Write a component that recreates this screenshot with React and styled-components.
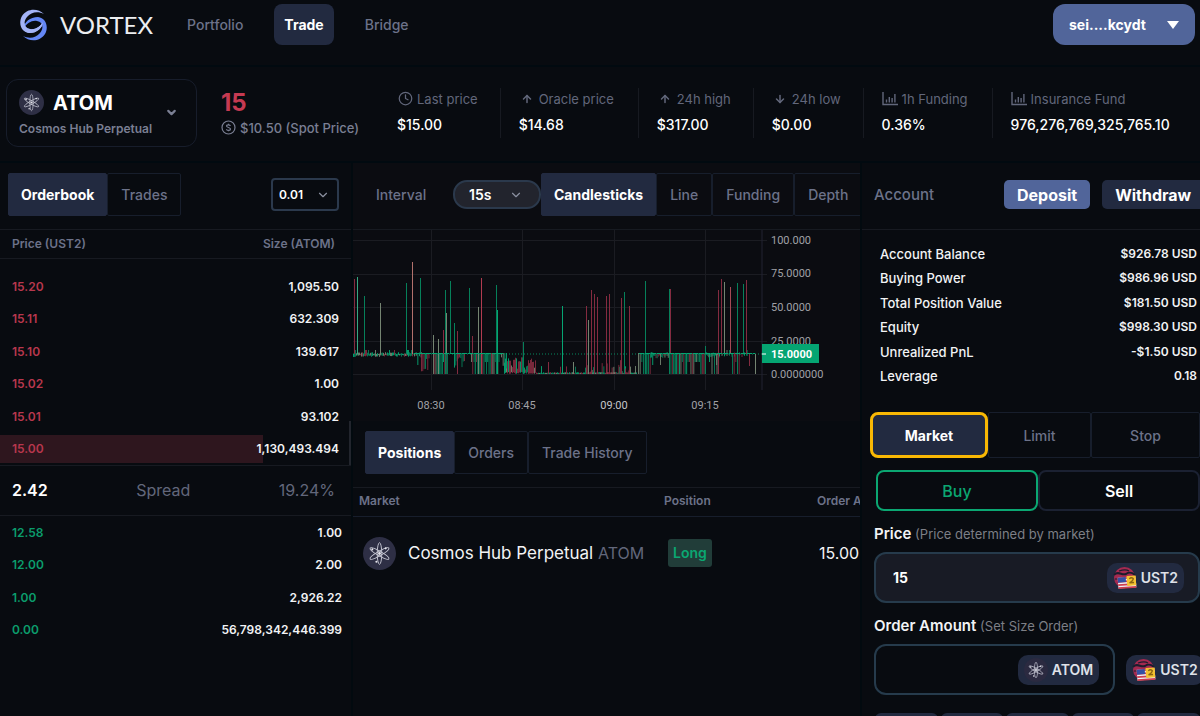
import { useState } from "react"
import styled, { createGlobalStyle } from "styled-components"
import { ArrowDown, ArrowUp, ChevronDown, Clock } from "lucide-react"

const GlobalStyle = createGlobalStyle`
    * { box-sizing: border-box; }
    body {
        margin: 0;
        background: #080b10;
        color: #f2f3f5;
        font-family: Inter, "Liberation Sans", sans-serif;
        font-size: 13px;
    }
    button, input, select { font-family: inherit; margin: 0; }
`

const Page = styled.div`
    height: 100vh;
    min-height: 600px;
    display: flex;
    flex-direction: column;
    overflow: hidden;
`

const Header = styled.header`
    display: flex;
    align-items: flex-start;
    padding: 4px 5px 0 20px;
    height: 67px;
    flex: none;
    border-bottom: 2px solid #010a10;
`

const Logo = styled.a`
    display: flex;
    align-items: center;
    gap: 13px;
    height: 41px;
    color: #eceef0;
    text-decoration: none;
    font-family: Lato, sans-serif;
    font-size: 24px;
`

const Nav = styled.nav`
    display: flex;
    gap: 21px;
    margin-left: 24px;
    flex: 1;
`

const NavLink = styled.a`
    height: 41px;
    line-height: 41px;
    padding: 0 10px;
    border-radius: 8px;
    font-size: 14px;
    font-weight: ${(p) => (p.$active ? 700 : 500)};
    color: ${(p) => (p.$active ? "white" : "#6c7289")};
    background: ${(p) => (p.$active ? "#222a40" : "none")};
    text-decoration: none;
`

const WalletButton = styled.button`
    display: flex;
    align-items: center;
    justify-content: space-between;
    width: 142px;
    height: 41px;
    padding: 0 16px;
    border: none;
    border-radius: 12px;
    background: #51659a;
    color: white;
    font-size: 14px;
    font-weight: 700;
`

const Ticker = styled.section`
    display: flex;
    align-items: center;
    height: 96px;
    flex: none;
    padding: 0 0 3px 6px;
    white-space: nowrap;
    border-bottom: 2px solid #010a10;
`

const MarketButton = styled.button`
    display: flex;
    align-items: center;
    justify-content: space-between;
    width: 191px;
    height: 68px;
    flex: none;
    padding: 0 18px 0 12px;
    border: 1px solid #171d2b;
    border-radius: 12px;
    background: none;
    color: #7a7f93;
    text-align: left;
`

const MarketTitle = styled.span`
    display: flex;
    align-items: center;
    gap: 9px;
    height: 30px;
    margin-bottom: 2px;
    color: white;
    font-size: 20px;
    font-weight: 700;
`

const MarketSub = styled.span`
    display: block;
    font-size: 12px;
    font-weight: 600;
    line-height: 18px;
`

const Spot = styled.div`
    width: 176px;
    flex: none;
    margin-left: 24px;
    color: #7a7f93;
    font-weight: 500;
    font-size: 13px;
`

const SpotPrice = styled.div`
    color: #c53a52;
    font-size: 24px;
    font-weight: 700;
    line-height: 30px;
`

const SpotNote = styled.div`
    display: flex;
    align-items: center;
    gap: 4px;
    height: 20px;
`

const Stats = styled.dl`
    display: flex;
    margin: 0;
`

const Stat = styled.div`
    height: 50px;
    padding: 1px ${(p) => p.$end}px 0 18px;
    border-right: 1px solid #171a21;
    &:first-child { padding-left: 0; }
    &:last-child { border-right: none; }
`

const StatLabel = styled.dt`
    display: flex;
    align-items: center;
    gap: 4px;
    height: 20px;
    font-size: 13px;
    color: #62677b;
`

const StatIcon = styled.span`
    display: flex;
    justify-content: center;
    width: 16px;
`

const StatValue = styled.dd`
    margin: 6px 0 0;
    font-size: 14px;
    font-weight: 500;
    line-height: 20px;
    color: white;
`

const Main = styled.main`
    display: grid;
    grid-template-columns: 353fr 509fr 338fr;
    flex: 1;
    min-height: 0;
`

const Column = styled.section`
    min-width: 0;
    overflow: hidden;
    border-right: 2px solid #020a0f;
    white-space: nowrap;
    &:last-child { border-right: none; }
`

const PanelBar = styled.div`
    display: flex;
    align-items: center;
    justify-content: ${(p) => (p.$spread ? "space-between" : "flex-start")};
    height: 67px;
    padding: 0 ${(p) => p.$end || 0}px 3px ${(p) => p.$start}px;
    border-bottom: 1px solid #171a21;
`

const Tabs = styled.div`
    display: flex;
    flex: none;
`

const Tab = styled.button`
    height: 43px;
    padding: 0 ${(p) => (p.$active ? 12 : 13)}px;
    border: 1px solid ${(p) => (p.$active ? "#222a40" : "#171e2c")};
    border-radius: 2px;
    background: ${(p) => (p.$active ? "#222a40" : "none")};
    color: ${(p) => (p.$active ? "white" : "#6c7289")};
    font-size: 14px;
    font-weight: ${(p) => (p.$active ? 700 : 500)};
    white-space: nowrap;
`

const SelectWrap = styled.label`
    position: relative;
    display: inline-flex;
    flex: none;
    color: #8b90a0;
    svg {
        position: absolute;
        right: ${(p) => (p.$round ? 18 : 9)}px;
        top: 50%;
        margin-top: -7px;
        pointer-events: none;
    }
`

const Select = styled.select`
    appearance: none;
    width: ${(p) => (p.$round ? 88 : 68)}px;
    height: ${(p) => (p.$round ? 29 : 33)}px;
    padding: 0 ${(p) => (p.$round ? 14 : 6)}px;
    border: 2px solid #2b394c;
    border-radius: ${(p) => (p.$round ? 14 : 4)}px;
    background: ${(p) => (p.$round ? "#22242d" : "#080b10")};
    color: white;
    font-size: ${(p) => (p.$round ? 14 : 12)}px;
    font-weight: 600;
`

const BookHead = styled.div`
    display: flex;
    align-items: center;
    justify-content: space-between;
    height: 29px;
    padding: 0 16px 2px 12px;
    border-bottom: 1px solid #171a21;
    color: #6c7289;
    font-size: 12px;
    font-weight: 600;
`

const BookSide = styled.div`
    position: relative;
    display: flex;
    flex-direction: column;
    justify-content: space-between;
    height: ${(p) => (p.$ask ? 206 : 128)}px;
    padding: ${(p) => (p.$ask ? "13px 0 2px" : "2px 0 0")};
`

const ScrollThumb = styled.div`
    position: absolute;
    right: 0;
    bottom: 0;
    width: 2px;
    height: 44px;
    background: #22252d;
`

const BookRow = styled.div`
    display: flex;
    align-items: center;
    justify-content: space-between;
    height: 28px;
    padding: 0 ${(p) => (p.$ask ? 12 : 9)}px 0 12px;
    font-size: 12px;
    font-weight: 600;
    background: ${(p) => (p.$depth ? `linear-gradient(to right, #2e161e ${p.$depth}%, transparent ${p.$depth}%)` : "none")};
    span:first-child { color: ${(p) => (p.$ask ? "#b8374d" : "#0b9d6c")}; }
`

const SpreadRow = styled.div`
    display: flex;
    align-items: center;
    justify-content: space-between;
    height: 51px;
    padding: 0 16px 2px 12px;
    border-top: 1px solid #171a21;
    border-bottom: 1px solid #171a21;
    color: #62677b;
    font-size: 16px;
    strong { color: white; font-weight: 600; }
`

const ChartPanel = styled.div`
    background: #0b0c11;
    height: 258px;
`

const IntervalLabel = styled.span`
    width: 77px;
    flex: none;
    color: #6c7289;
    font-size: 14px;
    font-weight: 500;
`

const ChartSvg = styled.svg`
    display: block;
    width: 100%;
    height: 188px;
`

const PositionTable = styled.table`
    table-layout: fixed;
    width: 594px;
    border-collapse: collapse;
    th {
        height: 28px;
        padding: 0 6px 2px;
        border-bottom: 1px solid #171e2c;
        color: #6c7289;
        font-size: 12px;
        font-weight: 600;
        text-align: left;
    }
    td { height: 74px; padding: 0 10px; font-size: 16px; }
    td:last-child { padding-left: 8px; }
`

const MarketCell = styled.span`
    display: flex;
    align-items: center;
    gap: 12px;
    font-size: 17px;
    small { color: #62677b; font-size: 16px; }
`

const Badge = styled.span`
    display: inline-block;
    padding: 0 5px;
    border-radius: 3px;
    background: #213d39;
    color: #0ba772;
    font-size: 14px;
    font-weight: 600;
    line-height: 28px;
`

const ActionRow = styled.div`
    display: flex;
    gap: 12px;
`

const ActionButton = styled.button`
    height: 29px;
    flex: none;
    padding: 0 13px;
    border: none;
    border-radius: 5px;
    background: ${(p) => (p.$primary ? "#51659a" : "#222a40")};
    color: white;
    font-size: 16px;
    font-weight: 700;
`

const AccountTitle = styled.h2`
    width: 130px;
    flex: none;
    margin: 0;
    color: #6c7289;
    font-size: 15px;
    font-weight: 500;
`

const AccountList = styled.dl`
    display: grid;
    grid-template-columns: 1fr auto;
    align-content: space-between;
    min-height: 182px;
    margin: 0;
    padding: 12px 3px 24px 18px;
    line-height: 24px;
    font-weight: 500;
    dd { margin: 0; text-align: right; font-size: 12px; font-weight: 600; }
`

const OrderTabs = styled.div`
    display: grid;
    grid-template-columns: 118fr 103fr 109fr;
    padding-left: 8px;
`

const OrderTab = styled(Tab)`
    height: 46px;
    border: ${(p) => (p.$active ? "3px solid #f9b804" : "1px solid #171e2c")};
    border-radius: ${(p) => (p.$active ? 8 : 2)}px;
`

const SideToggle = styled.div`
    display: grid;
    grid-template-columns: 1fr 1fr;
    padding: 12px 0 0 14px;
`

const SideButton = styled.button`
    height: 41px;
    border: 2px solid ${(p) => (p.$active ? "#0ba772" : "#1b2132")};
    border-radius: 8px;
    background: none;
    color: ${(p) => (p.$active ? "#0ba772" : "white")};
    font-size: 16px;
    font-weight: ${(p) => (p.$active ? 500 : 600)};
`

const Field = styled.div`
    padding: 13px 0 0 12px;
`

const FieldLabel = styled.label`
    display: block;
    height: 20px;
    margin-bottom: 8px;
    line-height: 20px;
    font-size: 15px;
    font-weight: 600;
    small { color: #7d7f86; font-size: 13px; font-weight: 400; }
`

const FieldRow = styled.div`
    display: flex;
    align-items: center;
    gap: 11px;
`

const InputBox = styled.div`
    display: flex;
    align-items: center;
    flex: ${(p) => (p.$fixed ? "none" : 1)};
    width: ${(p) => (p.$fixed ? "74%" : "auto")};
    min-width: 0;
    height: 51px;
    padding: 0 14px 0 17px;
    border: 2px solid #263b4c;
    border-radius: 12px;
    background: ${(p) => (p.$filled ? "#181b25" : "none")};
    input {
        flex: 1;
        min-width: 0;
        padding: 0;
        border: none;
        outline: none;
        background: none;
        color: white;
        font-size: 14px;
        font-weight: 700;
    }
`

const TokenPill = styled.span`
    display: flex;
    align-items: center;
    gap: 4px;
    height: 30px;
    flex: none;
    padding: 0 6px;
    border-radius: 10px;
    background: #222a40;
    color: #dfe1e8;
    font-size: 14px;
    font-weight: 600;
`

const PercentRow = styled.div`
    display: grid;
    grid-template-columns: repeat(5, 1fr);
    gap: 3px;
    padding: 18px 0 0 13px;
`

const PercentButton = styled.button`
    height: 36px;
    border: none;
    border-radius: 6px;
    background: #222a40;
    color: #dfe1e8;
    font-size: 13px;
`

const VortexMark = () => (
    <svg width="27" height="32" viewBox="0 0 27 32" aria-hidden="true">
        <path fill="#a3b3f6" d="M24 5C18-1 7-1 2 7c-4 7-1 16 7 17 8 0 14-5 14-11-3 5-8 8-13 7-6-1-7-7-3-12C11 3 18 2 24 5Z" />
        <path fill="#6487f5" d="M3 27c6 6 17 6 22-2 4-7 1-16-7-17-8 0-14 5-14 11 3-5 8-8 13-7 6 1 7 7 3 12-4 5-11 6-17 3Z" />
        <path fill="#a3b3f6" d="M2 17c1 4 4 7 8 7 7 0 12-5 13-11-3 5-8 8-13 7-4 0-6-3-5-6Z" />
    </svg>
)

const CosmosIcon = ({ size, bg = "#2e2f45" }) => (
    <svg width={size} height={size} viewBox="0 0 32 32" aria-hidden="true">
        <circle cx="16" cy="16" r="16" fill={bg} />
        <g fill="none" stroke="#c9cad6" strokeWidth="0.9">
            {[0, 60, 120].map((r) => (
                <ellipse key={r} cx="16" cy="16" rx="2.2" ry="10.5" transform={`rotate(${r} 16 16)`} />
            ))}
        </g>
        <g fill="#e6e6ee">
            <circle cx="16" cy="16" r="1.4" />
            <circle cx="9" cy="12" r="1" />
            <circle cx="22" cy="11" r="1" />
            <circle cx="13" cy="24" r="1" />
        </g>
    </svg>
)

const UstIcon = () => (
    <svg width="24" height="24" viewBox="0 0 24 24" aria-hidden="true">
        <circle cx="11.500" cy="11.500" r="10.500" fill="#a52a50" />
        <path d="M1 9c4-5 8 1 12-1 3-2 5-2 9 1" fill="none" stroke="#1b1d2d" strokeWidth="2" />
        <path d="M6 5c3-1 7-2 10 0M2 13h3" fill="none" stroke="#1b1d2d" strokeWidth="1.200" />
        <g transform="rotate(-4 14 16)">
            <path fill="#eef0f5" d="M5 11h18v11H5z" />
            <path stroke="#cf3e50" strokeWidth="1.700" d="M5 12h18M5 15.300h18M5 18.500h18M5 21.500h18" />
            <path fill="#3450a4" d="M5 11h8v5H5z" />
            <path fill="#f4c231" d="M14 10h9v10h-9z" />
            <path fill="none" stroke="#8b6412" strokeWidth="1.300" d="M16.500 13q2-2 4 0 0 2-4 4h4.500" />
        </g>
    </svg>
)

const BarsIcon = () => (
    <svg width="16" height="14" viewBox="0 0 16 14" fill="none" stroke="currentColor" aria-hidden="true">
        <path strokeWidth="1.400" d="M1 0v12.500h15" />
        <path strokeWidth="1.400" d="M4.500 10.500v-3M7.300 10.500V5M10.100 10.500V6M12.900 10.500V2" />
    </svg>
)

const DollarIcon = () => (
    <svg width="15" height="15" viewBox="0 0 15 15" fill="none" stroke="currentColor" strokeWidth="1.200" aria-hidden="true">
        <circle cx="7.500" cy="7.500" r="6.500" />
        <path d="M9.500 5.800C8.300 4.300 5.500 4.500 5.500 6.100s4 1.200 4 2.900-2.800 2-4.200.4M7.500 3.800v1M7.500 10.300v1" />
    </svg>
)

const GREEN = "#06805a"
const RED = "#842b40"
const MIX = "#748471"
const BASE = 124
const ZERO = 144

// [x, top, bottom, color]
const SPIKES = [
    [1, 49, BASE, RED], [4, 47, BASE, "#35a982"], [11, 66, BASE, GREEN], [27, 73, BASE, MIX],
    [53, 53, BASE, GREEN], [59, 32, BASE, "#b2716c"], [67, 48, BASE, GREEN], [80, 105, BASE, MIX],
    [85, 109, ZERO, MIX], [90, 100, BASE, RED], [92, 60, ZERO, GREEN], [93, 83, BASE, MIX],
    [97, 51, BASE, GREEN], [101, 93, BASE, GREEN], [104, 101, ZERO, RED], [116, 58, BASE, GREEN],
    [119, 106, BASE, RED], [125, 77, ZERO, MIX], [128, 48, ZERO, "#b23b50"], [143, 55, ZERO, GREEN],
    [144, 80, ZERO, "#05a572"], [170, 112, ZERO, GREEN], [195, 132, ZERO, RED], [209, 76, ZERO, "#05a572"],
    [220, 132, ZERO, MIX], [233, 76, ZERO, RED], [235, 90, ZERO, MIX], [238, 60, ZERO, RED],
    [241, 64, ZERO, RED], [244, 67, ZERO, RED], [253, 66, ZERO, RED], [256, 64, ZERO, RED],
    [268, 68, ZERO, RED], [271, 62, ZERO, GREEN], [276, 76, ZERO, RED], [292, 51, ZERO, GREEN],
    [316, 59, ZERO, GREEN], [317, 59, BASE, RED], [352, 116, ZERO, GREEN], [365, 60, ZERO, RED],
    [368, 49, BASE, RED], [371, 52, BASE, MIX], [377, 57, BASE, "#a64955"], [384, 53, ZERO, GREEN],
    [390, 54, BASE, GREEN], [393, 50, BASE, RED], [396, BASE, 136, RED], [402, BASE, ZERO, MIX],
]

// [from, to, shape of the small candles, candles per 10 px]
const ZONES = [
    [0, 60, "tight", 10],
    [61, 68, "short", 6],
    [68, 76, "dip", 8],
    [80, 94, "drop", 8],
    [101, 112, "dip", 8],
    [118, 146, "drop", 8],
    [148, 153, "dip", 6],
    [151, 183, "rise", 10],
    [183, 284, "floor", 10],
    [232, 282, "low", 6],
    [285, 297, "drop", 6],
    [297, 315, "short", 9],
    [316, 352, "drop", 7],
    [352, 366, "short", 9],
    [356, 366, "drop", 4],
    [366, 396, "tight", 4],
    [379, 386, "drop", 6],
]

const makeCandles = () => {
    let seed = 41
    const rand = () => {
        seed = (seed * 16807) % 2147483647
        return seed / 2147483647
    }
    const candles = []
    ZONES.forEach(([from, to, shape, density]) => {
        const step = 10 / density
        for (let x = from; x < to; x += step) {
            const n = rand()
            const color = [RED, "#05a572", MIX, GREEN][Math.floor(rand() * 4)]
            if (shape === "tight") candles.push([x, BASE - (n > 0.9 ? 4 : n * 2), BASE + 1 + rand() * 2, color])
            if (shape === "dip") candles.push([x, BASE - 1, BASE + 3 + n * 15, color])
            if (shape === "short") candles.push([x, BASE - 2 * rand(), BASE + (n > 0.85 ? 11 : 1 + n * 4), color])
            if (shape === "drop") candles.push([x, BASE - 1, n > 0.3 ? ZERO : BASE + 8, color])
            if (shape === "rise") candles.push([x, ZERO - 4 - n * 14, ZERO - rand() * 2, rand() > 0.4 ? color : RED])
            if (shape === "low") candles.push([x, ZERO - 1 - n * n * 13, ZERO, rand() > 0.4 ? color : RED])
            if (shape === "floor") candles.push([x, ZERO - (n > 0.9 ? n * 8 : 1 + n), ZERO, color])
        }
    })
    return candles
}

const CANDLES = makeCandles()

const PriceChart = () => (
    <ChartSvg viewBox="0 0 507 188" preserveAspectRatio="xMinYMin slice" role="img" aria-label="ATOM price candles">
        <g stroke="#1b1c22" shapeRendering="crispEdges">
            {[10, 44, 77, 111, 144].map((y) => <line key={y} x1="0" x2="414" y1={y} y2={y} />)}
            {[78, 169, 261, 352].map((x) => <line key={x} x1={x} x2={x} y1="0" y2="160" />)}
        </g>
        <line x1="409" x2="409" y1="0" y2="160" stroke="#232333" />
        <line x1="0" x2="409" y1={BASE} y2={BASE} stroke="#06875f" strokeDasharray="1 2" />
        {CANDLES.map(([x, top, bottom, color], i) => (
            <rect key={i} x={x} y={top} width="1" height={bottom - top} fill={color} opacity="0.9" />
        ))}
        {SPIKES.map(([x, top, bottom, color]) => (
            <rect key={x} x={x} y={top} width="1" height={bottom - top} fill={color} />
        ))}
        <path d="M61 123.500H151M286 123.500H402" stroke="#05a572" strokeDasharray="5 1" />
        <g fill="#a0a1a6" fontFamily="Roboto, sans-serif" fontSize="11">
            {["100.000", "75.0000", "50.0000", "25.0000", "0.0000000"].map((t, i) => (
                <text key={t} x="418" y={[14, 47, 81, 115, 148][i]}>{t}</text>
            ))}
            {["08:30", "08:45", "09:00", "09:15"].map((t, i) => (
                <text key={t} x={[78, 169, 261, 352][i]} y="179" textAnchor="middle" fill={i === 2 ? "#c4c5c9" : "#a0a1a6"}>{t}</text>
            ))}
        </g>
        <rect x="409" y="114" width="57" height="19" fill="#05a572" />
        <line x1="409" x2="413" y1="124" y2="124" stroke="white" />
        <text x="418" y="128" fill="white" fontFamily="Roboto, sans-serif" fontSize="11" fontWeight="700">15.0000</text>
    </ChartSvg>
)

const stats = [
    { icon: <Clock size={15} />, label: "Last price", value: "$15.00", end: 22 },
    { icon: <ArrowUp size={12} strokeWidth={3} />, label: "Oracle price", value: "$14.68", end: 24 },
    { icon: <ArrowUp size={12} strokeWidth={3} />, label: "24h high", value: "$317.00", end: 22 },
    { icon: <ArrowDown size={12} strokeWidth={3} />, label: "24h low", value: "$0.00", end: 22 },
    { icon: <BarsIcon />, label: "1h Funding", value: "0.36%", end: 24 },
    { icon: <BarsIcon />, label: "Insurance Fund", value: "976,276,769,325,765.10", end: 0 },
]

const asks = [
    ["15.20", "1,095.50"],
    ["15.11", "632.309"],
    ["15.10", "139.617"],
    ["15.02", "1.00"],
    ["15.01", "93.102"],
    ["15.00", "1,130,493.494", 75],
]

const bids = [
    ["12.58", "1.00"],
    ["12.00", "2.00"],
    ["1.00", "2,926.22"],
    ["0.00", "56,798,342,446.399"],
]

const account = [
    ["Account Balance", "$926.78 USD"],
    ["Buying Power", "$986.96 USD"],
    ["Total Position Value", "$181.50 USD"],
    ["Equity", "$998.30 USD"],
    ["Unrealized PnL", "-$1.50 USD"],
    ["Leverage", "0.18"],
]

const TabGroup = ({ items, as: Item = Tab, wrap: Wrap = Tabs }) => {
    const [active, setActive] = useState(items[0])
    return <Wrap role="tablist">
        {items.map((item) => (
            <Item key={item} type="button" role="tab" aria-selected={item === active} $active={item === active} onClick={() => setActive(item)}>
                {item}
            </Item>
        ))}
    </Wrap>
}

const OrderBook = () => (
    <Column>
        <PanelBar $spread $start={8} $end={12}>
            <TabGroup items={["Orderbook", "Trades"]} />
            <SelectWrap>
                <Select aria-label="Price grouping" defaultValue="0.01">
                    <option>0.01</option>
                    <option>0.1</option>
                </Select>
                <ChevronDown size={14} />
            </SelectWrap>
        </PanelBar>
        <BookHead><span>Price (UST2)</span><span>Size (ATOM)</span></BookHead>
        <BookSide $ask>
            {asks.map(([price, size, depth]) => (
                <BookRow key={price} $ask $depth={depth}><span>{price}</span><span>{size}</span></BookRow>
            ))}
            <ScrollThumb />
        </BookSide>
        <SpreadRow><strong>2.42</strong><span>Spread</span><span>19.24%</span></SpreadRow>
        <BookSide>
            {bids.map(([price, size]) => (
                <BookRow key={price}><span>{price}</span><span>{size}</span></BookRow>
            ))}
        </BookSide>
    </Column>
)

const ChartColumn = () => (
    <Column>
        <ChartPanel>
            <PanelBar $start={23}>
                <IntervalLabel>Interval</IntervalLabel>
                <SelectWrap $round>
                    <Select $round aria-label="Interval" defaultValue="15s">
                        <option>15s</option>
                        <option>1m</option>
                    </Select>
                    <ChevronDown size={14} />
                </SelectWrap>
                <TabGroup items={["Candlesticks", "Line", "Funding", "Depth"]} />
            </PanelBar>
            <PriceChart />
        </ChartPanel>
        <PanelBar $start={12}>
            <TabGroup items={["Positions", "Orders", "Trade History"]} />
        </PanelBar>
        <PositionTable>
            <colgroup><col width="305" /><col width="153" /><col width="136" /></colgroup>
            <thead>
                <tr><th>Market</th><th>Position</th><th>Order Amount</th></tr>
            </thead>
            <tbody>
                <tr>
                    <td><MarketCell><CosmosIcon size={33} /><span>Cosmos Hub Perpetual <small>ATOM</small></span></MarketCell></td>
                    <td><Badge>Long</Badge></td>
                    <td>15.00</td>
                </tr>
            </tbody>
        </PositionTable>
    </Column>
)

const TradeColumn = () => {
    const [side, setSide] = useState("Buy")
    return <Column>
        <PanelBar $start={12}>
            <AccountTitle>Account</AccountTitle>
            <ActionRow>
                <ActionButton type="button" $primary>Deposit</ActionButton>
                <ActionButton type="button">Withdraw</ActionButton>
            </ActionRow>
        </PanelBar>
        <AccountList>
            {account.map(([label, value]) => [<dt key={label}>{label}</dt>, <dd key={value}>{value}</dd>])}
        </AccountList>
        <TabGroup items={["Market", "Limit", "Stop"]} as={OrderTab} wrap={OrderTabs} />
        <SideToggle>
            {["Buy", "Sell"].map((s) => (
                <SideButton key={s} type="button" $active={s === side} onClick={() => setSide(s)}>{s}</SideButton>
            ))}
        </SideToggle>
        <Field>
            <FieldLabel htmlFor="price">Price <small>(Price determined by market)</small></FieldLabel>
            <InputBox $filled>
                <input id="price" defaultValue="15" />
                <TokenPill><UstIcon />UST2</TokenPill>
            </InputBox>
        </Field>
        <Field>
            <FieldLabel htmlFor="amount">Order Amount <small>(Set Size Order)</small></FieldLabel>
            <FieldRow>
                <InputBox $fixed>
                    <input id="amount" />
                    <TokenPill><CosmosIcon size={24} bg="#2b2a40" />ATOM</TokenPill>
                </InputBox>
                <TokenPill><UstIcon />UST2</TokenPill>
            </FieldRow>
        </Field>
        <PercentRow>
            {["10%", "25%", "50%", "75%", "100%"].map((p) => <PercentButton key={p} type="button">{p}</PercentButton>)}
        </PercentRow>
    </Column>
}

const App = () => (
    <Page>
        <GlobalStyle />
        <Header>
            <Logo href="#home"><VortexMark />VORTEX</Logo>
            <Nav>
                <NavLink href="#portfolio">Portfolio</NavLink>
                <NavLink href="#trade" $active>Trade</NavLink>
                <NavLink href="#bridge">Bridge</NavLink>
            </Nav>
            <WalletButton type="button">
                sei....kcydt
                <svg width="12" height="8" viewBox="0 0 12 8" fill="white" aria-hidden="true"><path d="M0 0h12L6 8Z" /></svg>
            </WalletButton>
        </Header>
        <Ticker>
            <MarketButton type="button">
                <span>
                    <MarketTitle><CosmosIcon size={25} />ATOM</MarketTitle>
                    <MarketSub>Cosmos Hub Perpetual</MarketSub>
                </span>
                <ChevronDown size={13} strokeWidth={4} />
            </MarketButton>
            <Spot>
                <SpotPrice>15</SpotPrice>
                <SpotNote><DollarIcon />$10.50 (Spot Price)</SpotNote>
            </Spot>
            <Stats>
                {stats.map((s) => (
                    <Stat key={s.label} $end={s.end}>
                        <StatLabel><StatIcon>{s.icon}</StatIcon>{s.label}</StatLabel>
                        <StatValue>{s.value}</StatValue>
                    </Stat>
                ))}
            </Stats>
        </Ticker>
        <Main>
            <OrderBook />
            <ChartColumn />
            <TradeColumn />
        </Main>
    </Page>
)

export default App
